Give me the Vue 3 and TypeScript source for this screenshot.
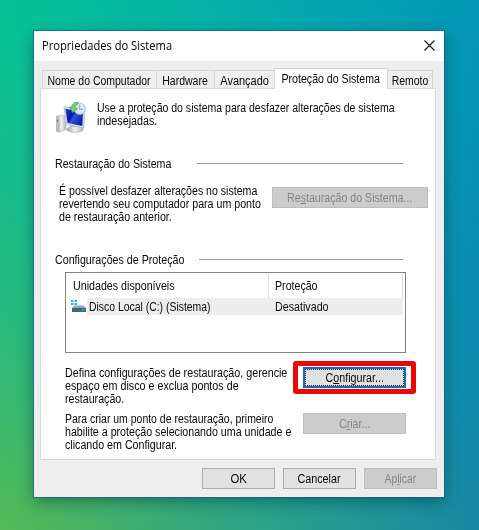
<script setup lang="ts">
interface Line { text: string; width: number }
interface Tab extends Line { id: string; active?: boolean }

const tabs: Tab[] = [
  { id: 'name', text: 'Nome do Computador', width: 103 },
  { id: 'hardware', text: 'Hardware', width: 45.6 },
  { id: 'advanced', text: 'Avançado', width: 48.4 },
  { id: 'protection', text: 'Proteção do Sistema', width: 98, active: true },
  { id: 'remote', text: 'Remoto', width: 36.5 },
]

const intro: Line[] = [
  { text: 'Use a proteção do sistema para desfazer alterações de sistema', width: 298 },
  { text: 'indesejadas.', width: 60 },
]
const restore: Line[] = [
  { text: 'É possível desfazer alterações no sistema', width: 198.5 },
  { text: 'revertendo seu computador para um ponto', width: 201.5 },
  { text: 'de restauração anterior.', width: 113 },
]
const configure: Line[] = [
  { text: 'Defina configurações de restauração, gerencie', width: 222.5 },
  { text: 'espaço em disco e exclua pontos de', width: 173.5 },
  { text: 'restauração.', width: 59.5 },
]
const create: Line[] = [
  { text: 'Para criar um ponto de restauração, primeiro', width: 208.5 },
  { text: 'habilite a proteção selecionando uma unidade e', width: 226.5 },
  { text: 'clicando em Configurar.', width: 112 },
]

// Condenses a label horizontally to the width given for it.
const vFit = {
  mounted(el: HTMLElement, binding: { value: number }) {
    el.style.transform = `scaleX(${binding.value / el.offsetWidth})`
  },
}
</script>

<template>
  <div class="desktop">
    <section class="window">
      <header class="titlebar">
        <span v-fit="130" class="t title">Propriedades do Sistema</span>
        <svg class="close" viewBox="0 0 11 11"><path d="M.5.5l10 10M10.5.5l-10 10" /></svg>
      </header>

      <nav class="tabs">
        <div v-for="tab in tabs" :key="tab.id" class="tab" :class="[tab.id, { active: tab.active }]">
          <span v-fit="tab.width" class="t mid">{{ tab.text }}</span>
        </div>
      </nav>

      <main class="panel">
        <div class="intro">
          <svg class="pc" viewBox="0 0 90 93">
            <defs>
              <linearGradient id="screen" x1="0" y1="0" x2="1" y2="0.6">
                <stop offset="0" stop-color="#1c3fd0" />
                <stop offset=".45" stop-color="#0a14a4" />
                <stop offset=".55" stop-color="#3350d8" />
                <stop offset="1" stop-color="#0c22b4" />
              </linearGradient>
              <linearGradient id="metal" x1="0" y1="0" x2="1" y2="0">
                <stop offset="0" stop-color="#a9a9a9" />
                <stop offset=".5" stop-color="#f1f1f1" />
                <stop offset="1" stop-color="#b5b8b8" />
              </linearGradient>
            </defs>
            <path d="M1 43L20 39L30 43V82L9 91L1 87Z" fill="url(#metal)" stroke="#aaa" stroke-width="2" />
            <path d="M9 50V90" stroke="#9d9d9d" stroke-width="2" />
            <rect x="3" y="53" width="3" height="5" fill="#666" />
            <path d="M43 66L70 70L68 82H43Z" fill="#aaa" />
            <ellipse cx="57" cy="82" rx="25" ry="9" fill="url(#metal)" stroke="#999" stroke-width="1.5" />
            <path d="M24 14L86 25L84 78L31 68Z" fill="#d8e0e8" stroke="#a6b2bd" stroke-width="2" />
            <path d="M28 20L81 30L79 72L35 63Z" fill="url(#screen)" />
            <circle cx="71" cy="20" r="17" fill="#dceaf2" stroke="#a3c3c8" stroke-width="3" />
            <path d="M71 8V22H82" fill="none" stroke="#7aa6c4" stroke-width="3" />
            <path d="M66 1C53 1 48 8 47 16L41 15L50 32L64 20L57 18C57 11 61 7 66 6Z" fill="#7fd070" stroke="#3da244" stroke-width="2.5" />
          </svg>
          <div class="copy">
            <p v-for="line in intro" :key="line.text"><span v-fit="line.width" class="t">{{ line.text }}</span></p>
          </div>
        </div>

        <div class="group first">
          <div class="legend"><span v-fit="116" class="t">Restauração do Sistema</span><i class="rule" /></div>
          <div class="row restore">
            <div class="copy">
              <p v-for="line in restore" :key="line.text"><span v-fit="line.width" class="t">{{ line.text }}</span></p>
            </div>
            <button class="btn wide" disabled><span v-fit="125" class="t mid">Re<u>s</u>tauração do Sistema...</span></button>
          </div>
        </div>

        <div class="group second">
          <div class="legend"><span v-fit="129" class="t">Configurações de Proteção</span><i class="rule" /></div>
          <div class="list">
            <div class="head">
              <div class="c1"><span v-fit="101.5" class="t">Unidades disponíveis</span></div>
              <div class="c2"><span v-fit="42.5" class="t">Proteção</span></div>
            </div>
            <div class="item">
              <svg class="drive" viewBox="0 0 15 14">
                <path d="M0 1h2.5v2H0zM3.500 1H6v2H3.500zM0 4h2.500v2H0zM3.500 4H6v2H3.500z" fill="#2bb3d3" />
                <path d="M3 6.500H13L15 9H1Z" fill="#8fa9b8" />
                <path d="M1 9H15V13H1Z" fill="#3c6682" />
                <path d="M11 10.500h2v1h-2z" fill="#5fe0c8" />
              </svg>
              <div class="selected">
                <div class="name"><span v-fit="121.5" class="t">Disco Local (C:) (Sistema)</span></div>
                <span v-fit="53.5" class="t">Desativado</span>
              </div>
            </div>
          </div>
        </div>

        <div class="row configure">
          <div class="copy">
            <p v-for="line in configure" :key="line.text"><span v-fit="line.width" class="t">{{ line.text }}</span></p>
          </div>
          <div class="highlight">
            <button class="btn focused"><span v-fit="58" class="t mid">C<u>o</u>nfigurar...</span></button>
          </div>
        </div>
        <div class="row create">
          <div class="copy">
            <p v-for="line in create" :key="line.text"><span v-fit="line.width" class="t">{{ line.text }}</span></p>
          </div>
          <button class="btn" disabled><span v-fit="31" class="t mid">C<u>r</u>iar...</span></button>
        </div>
      </main>

      <footer class="actions">
        <button class="btn"><span v-fit="16" class="t mid">OK</span></button>
        <button class="btn"><span v-fit="43" class="t mid">Cancelar</span></button>
        <button class="btn" disabled><span v-fit="32" class="t mid">Ap<u>l</u>icar</span></button>
      </footer>
    </section>
  </div>
</template>

<style>
body { background: #04acae; }
</style>

<style scoped>
* { box-sizing: border-box; }
p { margin: 0; height: 13px; }
.desktop {
  position: relative;
  width: 479px;
  height: 530px;
  padding: 31px 0 0 34px;
  overflow: hidden;
  background: linear-gradient(100deg, #05c496 0%, #04aaae 50%, #0290ba 100%);
  font: 12px/13px "Liberation Sans", Arial, sans-serif;
  color: #080808;
}
.desktop::before {
  content: "";
  position: absolute;
  inset: 0;
  background: linear-gradient(80deg, #55ba54 0%, #28a08c 50%, #107cae 100%);
  -webkit-mask-image: linear-gradient(#0000, #0007 60%, #000);
  mask-image: linear-gradient(#0000, #0007 60%, #000);
}
.window {
  position: relative;
  display: flex;
  flex-direction: column;
  width: 410px;
  height: 466px;
  background: #eee;
  box-shadow: 0 0 0 1px rgba(10, 95, 135, .65), 0 5px 14px rgba(0, 35, 50, .42);
}
.t { display: inline-block; padding-top: 1px; white-space: nowrap; transform-origin: 0 50%; }
.mid { transform-origin: 50% 50%; }
.titlebar {
  display: flex;
  flex: none;
  justify-content: space-between;
  height: 30px;
  padding: 6px 9px 0 8px;
  background: #fff;
}
.title { height: 18px; padding-top: 0; font: 12px/18px "Open Sans", "Noto Sans", sans-serif; color: #000; }
.close { width: 11px; height: 11px; margin-top: 3px; }
.close path { fill: none; stroke: #111; stroke-width: 1.1; }

.tabs { display: flex; flex: none; align-items: flex-end; height: 27px; padding-left: 8px; }
.tab {
  display: flex;
  flex: none;
  justify-content: center;
  width: 58px;
  height: 18px;
  padding-top: 2px;
  border: 1px solid #d6d6d6;
  border-width: 1px 1px 0 0;
  background: #eee;
}
.tab .t { padding-top: 2px; }
.tab.name { width: 115px; border-left-width: 1px; }
.tab.advanced { width: 59px; border-right: 0; }
.tab.protection { width: 114px; }
.tab.remote { width: 45px; }
.tab.active {
  position: relative;
  height: 21px;
  margin-bottom: -1px;
  border-left-width: 1px;
  background: #fff;
}
.panel {
  flex: none;
  width: 396px;
  height: 372px;
  margin-left: 6px;
  padding: 12px 0 0 14px;
  border: 1px solid #d9d9d9;
  background: #fff;
}
.intro { display: flex; height: 56px; }
.pc { flex: none; width: 30px; height: 31px; margin: 1px 11px 0 1px; }
.legend { display: flex; align-items: center; height: 13px; }
.legend .t { padding-top: 2px; }
.rule { flex: none; height: 1px; background: #999; }
.first .rule { width: 206px; margin-left: 11px; }
.second .rule { width: 204px; margin-left: -1px; }
.group.first { height: 96px; }
.row { display: flex; }
.row .copy { flex: none; width: 238px; }
.row.restore { padding: 14px 0 0 4px; }
.row.restore .copy { width: 213px; }
.row .btn { margin-top: 1px; }
.row.restore .btn { margin-top: 3px; }
.list {
  width: 341px;
  height: 81px;
  margin: 6px 0 0 10px;
  padding: 1px;
  border: 1px solid #7d828a;
}
.head { display: flex; height: 24px; padding-left: 6px; }
.c1 { width: 196px; border-right: 1px solid #dedede; padding-top: 5px; }
.c2 { width: 134px; border-right: 1px solid #dedede; padding: 5px 0 0 6px; }
.item { display: flex; height: 17px; padding-left: 4px; }
.drive { flex: none; width: 15px; height: 14px; margin-top: 1px; }
.selected { display: flex; width: 316px; height: 17px; margin-left: 1px; padding: 2px 0 0 2px; background: #ededed; }
.selected .name { width: 186px; }
.row.configure { height: 46px; margin: 13px 0 0 10px; }
.row.create { margin-left: 10px; }
.highlight {
  flex: none;
  width: 123px;
  height: 33px;
  margin: -5px 0 0 -10px;
  padding: 1px 5px;
  border: 5px solid #ec0606;
  border-radius: 3px;
}
.btn {
  display: flex;
  flex: none;
  justify-content: center;
  align-items: center;
  width: 103px;
  height: 21px;
  padding: 0;
  border: 1px solid #adadad;
  border-radius: 0;
  background: #e1e1e1;
  font: inherit;
  color: #080808;
}
.btn .t { padding-top: 2px; }
.btn:disabled { border-color: #bebebe; background: #ccc; color: #858585; }
.btn.wide { width: 156px; }
.highlight .btn { margin-top: 0; }
.btn.focused { border: 2px solid #1b6cae; outline: 1px dotted #0a2d55; outline-offset: -3px; }
.actions { display: flex; gap: 8px; margin: 8px 0 0 168px; }
.actions .btn { width: 73px; }
.actions .t { padding-top: 1px; }
u { text-underline-offset: 1px; text-decoration-thickness: 1px; }
</style>
